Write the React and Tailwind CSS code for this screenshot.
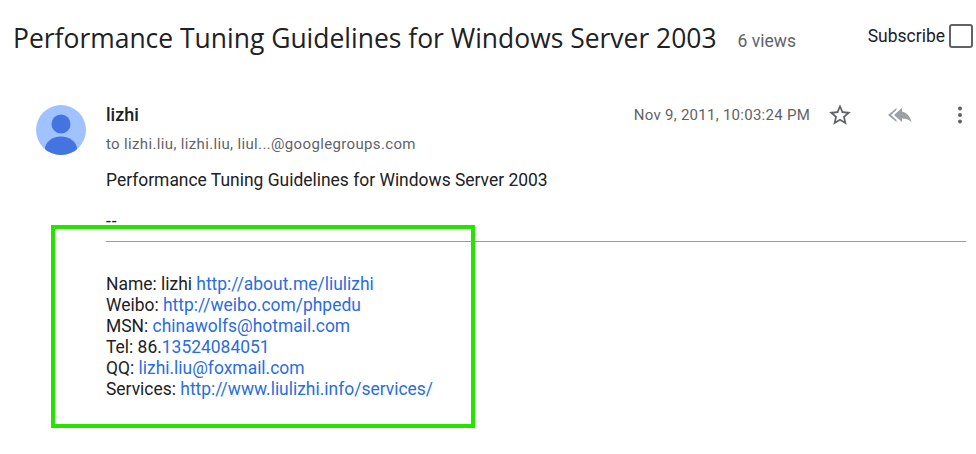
import React from 'react';

const Avatar = () => (
  <svg width="50" height="50" viewBox="0 0 50 50" className="shrink-0">
    <defs>
      <clipPath id="avatarClip">
        <circle cx="25" cy="25" r="25" />
      </clipPath>
    </defs>
    <circle cx="25" cy="25" r="25" fill="#a0c3ff" />
    <g clipPath="url(#avatarClip)" fill="#4374e0">
      <circle cx="25" cy="19" r="9.5" />
      <ellipse cx="25" cy="44" rx="16" ry="12.5" />
    </g>
  </svg>
);

const Star = () => (
  <svg width="26" height="26" viewBox="0 0 24 24" fill="#5f6368">
    <path d="M22 9.24l-7.19-.62L12 2 9.19 8.63 2 9.24l5.46 4.73L5.82 21 12 17.27 18.18 21l-1.63-7.03L22 9.24zM12 15.4l-3.76 2.27 1-4.28-3.32-2.88 4.38-.38L12 6.1l1.71 4.04 4.38.38-3.32 2.88 1 4.28L12 15.4z" />
  </svg>
);

const ReplyAll = () => (
  <svg width="28" height="24" viewBox="0 0 28 24" fill="#9aa0a6">
    <path d="M10.5 7V5L2 12l8.500 7v-2l-5.500-5z" />
    <path d="M16 8.500V5L8 12l8 7v-3.600c4.500 0 7.500 1.300 9.500 3.800-.8-4-3.300-9.200-9.500-10.700z" />
  </svg>
);

const Dots = () => (
  <svg width="24" height="24" viewBox="0 0 24 24" fill="#5f6368">
    <circle cx="12" cy="5.500" r="2" />
    <circle cx="12" cy="12" r="2" />
    <circle cx="12" cy="18.500" r="2" />
  </svg>
);

const A = ({ children }) => <a className="text-[#2a6de0]">{children}</a>;

export default function App() {
  return (
    <div className="relative w-[976px] h-[454px] overflow-hidden bg-white font-['Roboto',sans-serif] text-[#202124]">
      <div className="flex items-start pl-[13px] pr-[3px] pt-[20px]">
        <h1 className="font-['Open_Sans',sans-serif] text-[26.460px] leading-[36px] whitespace-nowrap">
          Performance Tuning Guidelines for Windows Server 2003
        </h1>
        <span className="ml-[21px] mt-[11px] text-[#5f6368] text-[17.500px] leading-[20px]">6 views</span>
        <div className="ml-auto flex items-center gap-[4px] pt-[4px]">
          <span className="text-[17.500px] leading-[24px]">Subscribe</span>
          <span className="w-[24px] h-[24px] border-2 border-[#5f6368] rounded-[3px]" />
        </div>
      </div>

      <div className="flex pl-[36px] pr-[10px] mt-[49px]">
        <Avatar />
        <div className="ml-[20px] flex-1">
          <div className="flex items-start">
            <div>
              <div className="font-medium text-[18px] leading-[20px]">lizhi</div>
              <div className="mt-[9px] text-[15px] leading-[20px] text-[#5f6368] tracking-[0.35px]">
                to lizhi.liu, lizhi.liu, liul...@googlegroups.com
              </div>
            </div>
            <div className="ml-auto -mr-[6px] -mt-[3px] flex items-center text-[#5f6368]">
              <span className="text-[15px] leading-[20px] tracking-[0.27px]">Nov 9, 2011, 10:03:24 PM</span>
              <span className="ml-[17px]"><Star /></span>
              <span className="ml-[33px]"><ReplyAll /></span>
              <span className="ml-[34px]"><Dots /></span>
            </div>
          </div>

          <div className="mt-[16px] text-[17.460px] leading-[21px]">Performance Tuning Guidelines for Windows Server 2003</div>
          <div className="mt-[20px] text-[17.460px] leading-[21px] tracking-[1px]">--</div>
          <hr className="mt-[9px] border-t border-[#9a9a9a]" />
          <div className="mt-[32px] text-[17.460px] leading-[21px]">
            <div>Name: lizhi <A>http://about.me/liulizhi</A></div>
            <div>Weibo: <A>http://weibo.com/phpedu</A></div>
            <div>MSN: <A>chinawolfs@hotmail.com</A></div>
            <div>Tel: 86.<A>13524084051</A></div>
            <div>QQ: <A>lizhi.liu@foxmail.com</A></div>
            <div>Services: <A>http://www.liulizhi.info/services/</A></div>
          </div>
        </div>
      </div>

      <div className="absolute left-[51px] top-[225px] w-[424px] h-[203px] border-4 border-[#27e400]" />
    </div>
  );
}
